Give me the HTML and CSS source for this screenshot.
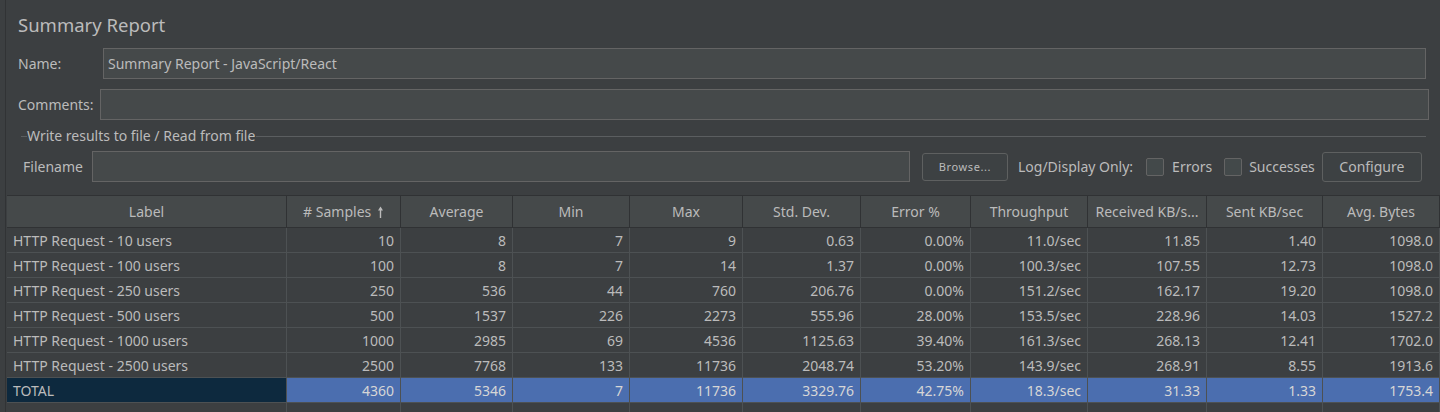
FILE: index.html
```html
<!DOCTYPE html>
<html lang="en">
<head>
<meta charset="utf-8">
<title>Summary Report</title>
<link rel="stylesheet" href="styles.css">
</head>
<body>
<div class="panel">
  <h1 class="title">Summary Report</h1>
  <div class="field-row name-row">
    <span class="field-label">Name:</span>
    <div class="text-input">Summary Report - JavaScript/React</div>
  </div>
  <div class="field-row comments-row">
    <span class="field-label">Comments:</span>
    <div class="text-input"></div>
  </div>
  <div class="group-title"><span class="group-text">Write results to file / Read from file</span></div>
  <div class="file-row">
    <span class="field-label file-label">Filename</span>
    <div class="text-input file-input"></div>
    <button class="btn btn-browse">Browse...</button>
    <span class="log-label">Log/Display Only:</span>
    <span class="checkbox"></span>
    <span class="check-text">Errors</span>
    <span class="checkbox cb-second"></span>
    <span class="check-text">Successes</span>
    <button class="btn btn-configure">Configure</button>
  </div>
  <table class="results">
    <thead>
      <tr>
        <th class="c-label">Label</th>
        <th class="c-samples"># Samples <svg class="sort-arrow" width="7" height="12" viewBox="0 0 7 12"><path d="M3.5 2.5V12" stroke="#bbbbbb" stroke-width="1.4"/><path d="M1 4.5L3.5 0.5L6 4.5Z" fill="#bbbbbb"/></svg></th>
        <th class="c-avg">Average</th>
        <th class="c-min">Min</th>
        <th class="c-max">Max</th>
        <th class="c-std">Std. Dev.</th>
        <th class="c-err">Error %</th>
        <th class="c-thr">Throughput</th>
        <th class="c-rec">Received KB/s...</th>
        <th class="c-sent">Sent KB/sec</th>
        <th class="c-bytes">Avg. Bytes</th>
      </tr>
    </thead>
    <tbody>
      <tr><td>HTTP Request - 10 users</td><td>10</td><td>8</td><td>7</td><td>9</td><td>0.63</td><td>0.00%</td><td>11.0/sec</td><td>11.85</td><td>1.40</td><td>1098.0</td></tr>
      <tr><td>HTTP Request - 100 users</td><td>100</td><td>8</td><td>7</td><td>14</td><td>1.37</td><td>0.00%</td><td>100.3/sec</td><td>107.55</td><td>12.73</td><td>1098.0</td></tr>
      <tr><td>HTTP Request - 250 users</td><td>250</td><td>536</td><td>44</td><td>760</td><td>206.76</td><td>0.00%</td><td>151.2/sec</td><td>162.17</td><td>19.20</td><td>1098.0</td></tr>
      <tr><td>HTTP Request - 500 users</td><td>500</td><td>1537</td><td>226</td><td>2273</td><td>555.96</td><td>28.00%</td><td>153.5/sec</td><td>228.96</td><td>14.03</td><td>1527.2</td></tr>
      <tr><td>HTTP Request - 1000 users</td><td>1000</td><td>2985</td><td>69</td><td>4536</td><td>1125.63</td><td>39.40%</td><td>161.3/sec</td><td>268.13</td><td>12.41</td><td>1702.0</td></tr>
      <tr><td>HTTP Request - 2500 users</td><td>2500</td><td>7768</td><td>133</td><td>11736</td><td>2048.74</td><td>53.20%</td><td>143.9/sec</td><td>268.91</td><td>8.55</td><td>1913.6</td></tr>
      <tr class="total"><td>TOTAL</td><td>4360</td><td>5346</td><td>7</td><td>11736</td><td>3329.76</td><td>42.75%</td><td>18.3/sec</td><td>31.33</td><td>1.33</td><td>1753.4</td></tr>
      <tr class="empty"><td></td><td></td><td></td><td></td><td></td><td></td><td></td><td></td><td></td><td></td><td></td></tr>
    </tbody>
  </table>
</div>
</body>
</html>
```
FILE: styles.css
```css
html, body {
  margin: 0;
  padding: 0;
  background: #3c3f41;
  height: 412px;
  overflow: hidden;
}

body {
  font-family: "Noto Sans", "Open Sans", sans-serif;
  font-size: 14px;
  color: #bbbbbb;
}

.panel {
  margin-left: 5px;
  border-left: 1px solid #313335;
  height: 412px;
  box-sizing: border-box;
}

.title {
  margin: 0;
  padding: 12px 0 0 12px;
  height: 38px;
  box-sizing: border-box;
  font-size: 18.5px;
  font-weight: normal;
  line-height: 26px;
  color: #bbbbbb;
}

.field-row {
  display: flex;
  align-items: center;
  margin-top: 10px;
  padding-left: 12px;
}

.field-row.name-row .field-label { width: 85px; }
.field-row.name-row .text-input { width: 1323px; }
.field-row.comments-row .field-label { width: 82px; }
.field-row.comments-row .text-input { width: 1329px; }

.field-label {
  flex: none;
  line-height: 18px;
}

.text-input {
  flex: none;
  height: 31px;
  box-sizing: border-box;
  border: 1px solid #646464;
  background: #45494a;
  padding: 0 4px;
  line-height: 29px;
  color: #bbbbbb;
}

.group-title {
  display: flex;
  align-items: center;
  margin-top: 8px;
  margin-left: 15px;
  width: 1405px;
  height: 16px;
}

.group-title::before {
  content: "";
  width: 6px;
  height: 1px;
  background: #5b5e60;
  flex: none;
}

.group-title::after {
  content: "";
  flex: 1;
  height: 1px;
  background: #5b5e60;
}

.group-text {
  padding: 0 1px 0 0;
  line-height: 16px;
}

.file-row {
  display: flex;
  align-items: center;
  margin-top: 7px;
  padding-left: 17px;
  height: 31px;
}

.file-label { width: 69px; }

.file-input { width: 818px; }

.btn {
  flex: none;
  font-family: inherit;
  color: #bbbbbb;
  background: #3d4143;
  border: 1px solid #5e6060;
  border-radius: 3px;
  padding: 0;
  box-sizing: border-box;
}

.btn-browse {
  margin-left: 12px;
  width: 86px;
  height: 28px;
  font-size: 11px;
  letter-spacing: 0.6px;
}

.log-label {
  margin-left: 10px;
  flex: none;
}

.checkbox {
  flex: none;
  width: 18px;
  height: 18px;
  box-sizing: border-box;
  border: 1px solid #646464;
  border-radius: 2px;
  background: #43494a;
  margin-left: 13px;
  margin-right: 8px;
}

.cb-second { margin-left: 12px; margin-right: 7px; }

.check-text { flex: none; }

.btn-configure {
  margin-left: 7px;
  width: 100px;
  height: 30px;
  font-size: 14px;
}

.results {
  margin-top: 13px;
  margin-left: 1px;
  table-layout: fixed;
  border-collapse: separate;
  border-spacing: 0;
  width: 1433px;
}

.results th, .results td {
  box-sizing: border-box;
  padding: 0 6px;
  white-space: nowrap;
  overflow: hidden;
  font-weight: normal;
}

.results th {
  height: 33px;
  padding: 0 2px;
  background: #45494a;
  border-top: 1px solid #303234;
  border-bottom: 1px solid #303234;
  border-right: 1px solid #303234;
  text-align: center;
  color: #bbbbbb;
}

.results td {
  height: 25px;
  border-bottom: 1px solid #4d5153;
  border-right: 1px solid #4d5153;
  text-align: right;
}

.results td:first-child { text-align: left; }

.c-label { width: 280px; }
.c-samples { width: 114px; }
.c-avg { width: 112px; }
.c-min { width: 117px; }
.c-max { width: 113px; }
.c-std { width: 118px; }
.c-err { width: 110px; }
.c-thr { width: 117px; }
.c-rec { width: 119px; }
.c-sent { width: 116px; }
.c-bytes { width: 117px; }

.sort-arrow { vertical-align: -1px; margin-left: 2px; }

.total td {
  background: #4b6eaf;
  color: #d6d6d6;
}

.total td:first-child {
  background: #0d293e;
  color: #bbbbbb;
}
```
